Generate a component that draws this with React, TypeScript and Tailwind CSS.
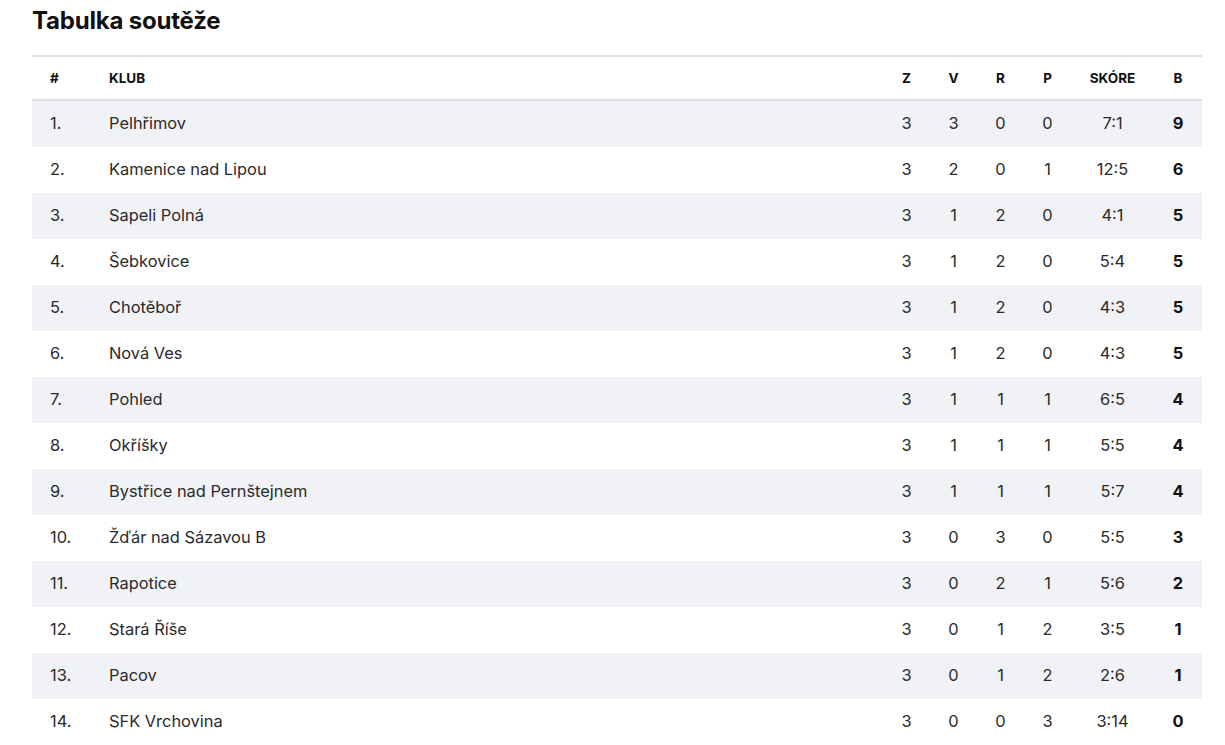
import React from "react";

const rows: [string, string, number, number, number, number, string, number][] = [
  ["1.", "Pelhřimov", 3, 3, 0, 0, "7:1", 9],
  ["2.", "Kamenice nad Lipou", 3, 2, 0, 1, "12:5", 6],
  ["3.", "Sapeli Polná", 3, 1, 2, 0, "4:1", 5],
  ["4.", "Šebkovice", 3, 1, 2, 0, "5:4", 5],
  ["5.", "Chotěboř", 3, 1, 2, 0, "4:3", 5],
  ["6.", "Nová Ves", 3, 1, 2, 0, "4:3", 5],
  ["7.", "Pohled", 3, 1, 1, 1, "6:5", 4],
  ["8.", "Okříšky", 3, 1, 1, 1, "5:5", 4],
  ["9.", "Bystřice nad Pernštejnem", 3, 1, 1, 1, "5:7", 4],
  ["10.", "Žďár nad Sázavou B", 3, 0, 3, 0, "5:5", 3],
  ["11.", "Rapotice", 3, 0, 2, 1, "5:6", 2],
  ["12.", "Stará Říše", 3, 0, 1, 2, "3:5", 1],
  ["13.", "Pacov", 3, 0, 1, 2, "2:6", 1],
  ["14.", "SFK Vrchovina", 3, 0, 0, 3, "3:14", 0],
];

const grid = "grid grid-cols-[77px_1fr_47px_47px_47px_47px_83px_48px] items-center";

export default function App() {
  return (
    <div className="w-[1225px] h-[745px] overflow-hidden bg-white font-['Inter',sans-serif] text-[#2a2a2a]">
      <div className="ml-[32px] w-[1170px]">
        <div className="h-[55px] pt-[6px]">
          <h1 className="text-[24px] leading-[30px] font-bold tracking-[-0.2px] text-[#111]">Tabulka soutěže</h1>
        </div>
        <div className={`${grid} h-[46px] border-t-2 border-b-2 border-[#dfe1e6] text-[13.5px] font-bold text-[#111]`}>
          <div className="pl-[18px]">#</div>
          <div>KLUB</div>
          <div className="text-center">Z</div>
          <div className="text-center">V</div>
          <div className="text-center">R</div>
          <div className="text-center">P</div>
          <div className="text-center">SKÓRE</div>
          <div className="text-center">B</div>
        </div>
        {rows.map((r, i) => (
          <div
            key={i}
            className={`${grid} h-[46px] pb-[2px] text-[16.4px] ${i % 2 === 0 ? "bg-[#f1f2f6]" : "bg-white"}`}
          >
            <div className="pl-[18px]">{r[0]}</div>
            <div>{r[1]}</div>
            <div className="text-center">{r[2]}</div>
            <div className="text-center">{r[3]}</div>
            <div className="text-center">{r[4]}</div>
            <div className="text-center">{r[5]}</div>
            <div className="text-center">{r[6]}</div>
            <div className="text-center font-bold text-[#111]">{r[7]}</div>
          </div>
        ))}
      </div>
    </div>
  );
}
